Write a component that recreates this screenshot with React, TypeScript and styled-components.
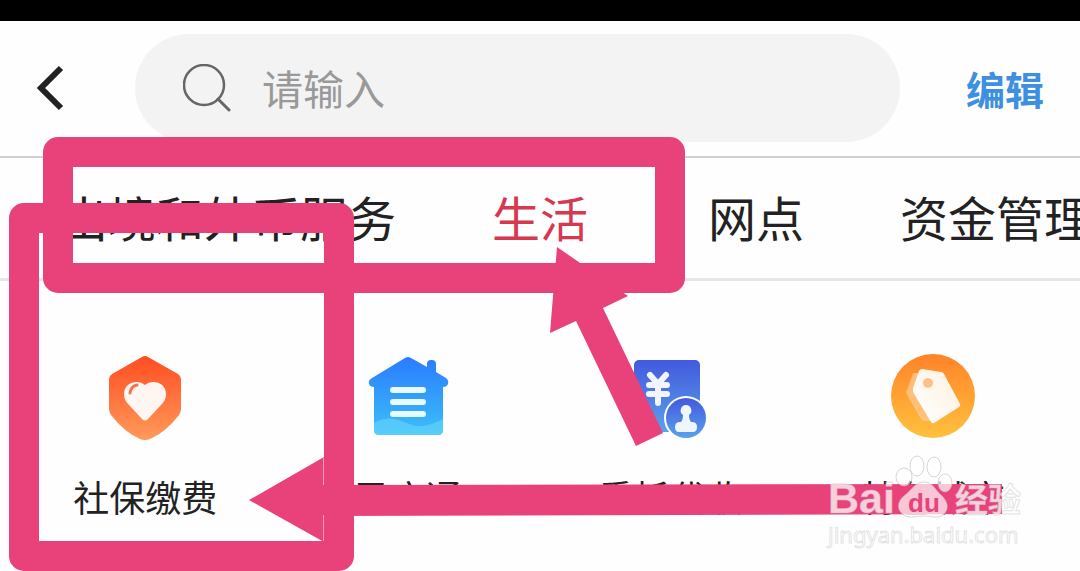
import React from "react";
import styled, { createGlobalStyle } from "styled-components";

const Global = createGlobalStyle`
  * { box-sizing: border-box; }
  body { margin: 0; background: #fefefe; overflow: hidden; }
`;

const Page = styled.main`
  position: relative;
  min-height: 571px;
  overflow: hidden;
  font-family: "Noto Sans CJK SC", sans-serif;
  color: #222;
`;
const StatusBar = styled.div`
  height: 21px;
  background: #000;
`;
const Header = styled.header`
  display: flex;
  align-items: center;
  height: 137px;
  padding: 0 36px 2px;
  border-bottom: 2px solid #d0d0d0;
`;
const BackButton = styled.button`
  width: 99px;
  height: 48px;
  padding: 0;
  border: 0;
  background: none;
  text-align: left;
`;
const SearchBox = styled.label`
  flex: 1;
  display: flex;
  align-items: center;
  gap: 31px;
  height: 108px;
  padding: 0 48px;
  border-radius: 54px;
  background: #f3f3f3;
`;
const SearchInput = styled.input`
  flex: 1;
  min-width: 0;
  height: 62px;
  padding: 0 0 2px;
  border: 0;
  outline: 0;
  background: none;
  font: 400 41px/60px "Noto Sans CJK SC", sans-serif;
  &::placeholder { color: #999; opacity: 1; }
`;
const EditButton = styled.button`
  margin-left: 66px;
  padding: 0;
  border: 0;
  background: none;
  color: #3d8fdf;
  font: 700 39px/56px "Noto Sans CJK SC", sans-serif;
`;
const Tabs = styled.nav`
  display: flex;
  gap: 96px;
  height: 123px;
  padding: 22px 0 0 60px;
  border-bottom: 3px solid #e6e6e6;
  overflow: hidden;
`;
const Tab = styled.a<{ $active?: boolean }>`
  flex: none;
  padding-right: ${(p) => (p.$active ? "24px" : "0")};
  font-size: 48px;
  line-height: 72px;
  text-decoration: none;
  color: ${(p) => (p.$active ? "#d63850" : "#222")};
`;
const Services = styled.section`
  display: grid;
  grid-template-columns: repeat(4, 1fr);
  padding: 73px 16px 0 14px;
`;
const Service = styled.button`
  display: flex;
  flex-direction: column;
  align-items: center;
  gap: 31px;
  padding: 0;
  border: 0;
  background: none;
  color: #222;
  font: 400 36px/54px "Noto Sans CJK SC", sans-serif;
  svg { overflow: visible; }
`;
const Markup = styled.svg`
  position: absolute;
  top: 0;
  left: 0;
  pointer-events: none;
`;
const Watermark = styled.div`
  position: absolute;
  top: 454px;
  right: 56px;
  width: 196px;
  color: rgba(255, 255, 255, 0.75);
  font-family: "Noto Sans", "Noto Sans CJK SC", sans-serif;
  white-space: nowrap;
  -webkit-text-stroke: 1px rgba(190, 190, 190, 0.45);
  pointer-events: none;
`;
const Brand = styled.div`
  display: flex;
  align-items: flex-start;
  height: 66px;
  font: 700 43px/88px "Liberation Sans", sans-serif;
`;
const BrandCjk = styled.span`
  font: 700 33px/88px "Noto Sans CJK SC", sans-serif;
`;
const Site = styled.div`
  font-size: 22px;
  line-height: 28px;
`;

function Shield() {
  return (
    <svg width="84" height="84" viewBox="0 0 84 84" aria-hidden="true">
      <defs>
        <linearGradient id="shield" x1="0" y1="0" x2="0" y2="1">
          <stop offset="0" stopColor="#ff4d22" />
          <stop offset="1" stopColor="#ff9a5a" />
        </linearGradient>
      </defs>
      <path fill="url(#shield)" d="M39 3q3-2 6 0l30 17q3 2 3 5v30q0 3-2 6-13 17-29 24-5 2-10 0Q21 78 8 61q-2-3-2-6V25q0-3 3-5Z" />
      <path fill="#fff5f1" d="M42 31c7-6 21-3 21 9 0 5-2 8-5 11L45 65q-3 3-6 0L26 51c-3-3-5-6-5-11 0-12 14-15 21-9Z" />
      <path d="M27 39q1-7 7-8" fill="none" stroke="#f3764b" strokeWidth="3" strokeLinecap="round" />
    </svg>
  );
}
function House() {
  return (
    <svg width="84" height="84" viewBox="0 0 84 84" aria-hidden="true">
      <defs>
        <linearGradient id="house" x1="0" y1="0" x2="0" y2="1">
          <stop offset="0" stopColor="#2b7bff" />
          <stop offset="1" stopColor="#3bc0f8" />
        </linearGradient>
      </defs>
      <path fill="url(#house)" d="M39 4q3-2 6 0l16 9v-3q0-4 4-4h1q4 0 4 4v8l10 6q3 2 2 6-1 3-5 3v43q0 5-5 5H13q-5 0-5-5V33q-4 0-5-3-1-4 3-6Z" />
      <path fill="#6ed8fb" fillOpacity=".55" d="M8 69c16-9 26-2 38 2 12 3 20-1 31-6v11q0 5-5 5H13q-5 0-5-5Z" />
      <path d="M27 36h30M27 48h30M27 60h30" stroke="#e5fbff" strokeWidth="6" strokeLinecap="round" />
    </svg>
  );
}
function Bill() {
  return (
    <svg width="84" height="84" viewBox="0 0 84 84" aria-hidden="true">
      <defs>
        <linearGradient id="bill" x1="0" y1="0" x2="0" y2="1">
          <stop offset="0" stopColor="#4359de" />
          <stop offset="1" stopColor="#59a2e9" />
        </linearGradient>
      </defs>
      <rect x="6" y="6" width="66" height="72" rx="5" fill="url(#bill)" />
      <path d="m22 21 8 9 8-9M21 31h18M21 40h18M30 30v19" fill="none" stroke="#f2f5ff" strokeWidth="6" strokeLinecap="round" strokeLinejoin="round" />
      <circle cx="58" cy="64" r="22" fill="#fefefe" />
      <circle cx="58" cy="64" r="20" fill="url(#bill)" />
      <path fill="#eff6ff" d="M58 51a5.500 5.500 0 0 1 3 10q0 5 2 7h1q5 0 5 5t-4 5H51q-4 0-4-5t5-5h1q2-2 2-7a5.500 5.500 0 0 1 3-10Z" />
    </svg>
  );
}
function Tag() {
  return (
    <svg width="84" height="84" viewBox="0 0 84 84" aria-hidden="true">
      <defs>
        <linearGradient id="tag" x1="0" y1="0" x2="0" y2="1">
          <stop offset="0" stopColor="#ff8329" />
          <stop offset="1" stopColor="#ffc13d" />
        </linearGradient>
        <linearGradient id="paper" x1="0" y1="1" x2="1" y2="0">
          <stop offset="0" stopColor="#fff" />
          <stop offset="1" stopColor="#fff0df" />
        </linearGradient>
      </defs>
      <circle cx="42" cy="42" r="42" fill="url(#tag)" />
      <path fill="#ffc891" fillOpacity=".75" d="m22 19-7 20 15 26q2 3 9 2l-9-48Z" />
      <path fill="url(#paper)" d="M28 17q1-2 3-2l19 3q2 0 3 2l16 30q1 2-1 3L43 69q-2 1-3-1L22 38v-4Z" />
      <circle cx="37" cy="29" r="5" fill="#ffc08b" />
    </svg>
  );
}
function Paw() {
  return (
    <svg width="60" height="66" viewBox="0 0 60 66" aria-hidden="true">
      <g fill="#fff" fillOpacity=".7" stroke="#bbb" strokeOpacity=".6">
        <ellipse cx="9" cy="23" rx="8" ry="9" />
        <ellipse cx="22" cy="12" rx="7" ry="10" />
        <ellipse cx="39" cy="13" rx="7" ry="10" />
        <ellipse cx="50" cy="29" rx="7" ry="9" />
        <path d="M29 28c9 0 12 9 17 13 8 7 8 15 2 20-6 4-12 1-19 1s-14 3-20-1c-8-5-7-14 1-20 6-4 10-13 19-13Z" />
      </g>
      <text x="29" y="58" textAnchor="middle" fontFamily="Liberation Sans" fontWeight="700" fontSize="26" fill="#e9417a" stroke="none">du</text>
    </svg>
  );
}

const services = [
  { name: "社保缴费", Icon: Shield },
  { name: "民店通", Icon: House },
  { name: "委托代收", Icon: Bill },
  { name: "特色城市", Icon: Tag },
];

export default function App() {
  return (
    <Page>
      <Global />
      <StatusBar />
      <Header>
        <BackButton aria-label="返回">
          <svg width="30" height="48" viewBox="0 0 30 48" aria-hidden="true">
            <path d="M25 4 5 24l20 20" fill="none" stroke="#222" strokeWidth="6" />
          </svg>
        </BackButton>
        <SearchBox>
          <svg width="48" height="48" viewBox="0 0 48 48" aria-hidden="true">
            <circle cx="21" cy="21" r="20" fill="none" stroke="#666" strokeWidth="2.500" />
            <path d="m35 35 11 11" stroke="#666" strokeWidth="3" strokeLinecap="round" />
          </svg>
          <SearchInput aria-label="搜索" placeholder="请输入" />
        </SearchBox>
        <EditButton>编辑</EditButton>
      </Header>
      <Tabs>
        <Tab href="#forex">出境和外币服务</Tab>
        <Tab href="#life" $active>生活</Tab>
        <Tab href="#branch">网点</Tab>
        <Tab href="#funds">资金管理</Tab>
      </Tabs>
      <Services>
        {services.map(({ name, Icon }) => (
          <Service key={name}>
            <Icon />
            {name}
          </Service>
        ))}
      </Services>
      <Markup width="1080" height="571" viewBox="0 0 1080 571" aria-hidden="true">
        <g fill="none" stroke="#e9417a" strokeWidth="30" strokeLinejoin="round">
          <rect x="58" y="152" width="612" height="126" />
          <rect x="24" y="218" width="315" height="338" />
        </g>
        <g fill="#e9417a">
          <path d="m557 247 71 49-25 12 60 125-27 13-60-125-26 12Z" />
          <path d="m249 500 75-43v28l678-1v30l-678 2v26Z" />
        </g>
        <path d="M323.500 458v27M323.500 515v26" stroke="#f3a0bd" />
      </Markup>
      <Watermark>
        <Brand>
          Bai
          <Paw />
          <BrandCjk>经验</BrandCjk>
        </Brand>
        <Site>jingyan.baidu.com</Site>
      </Watermark>
    </Page>
  );
}
